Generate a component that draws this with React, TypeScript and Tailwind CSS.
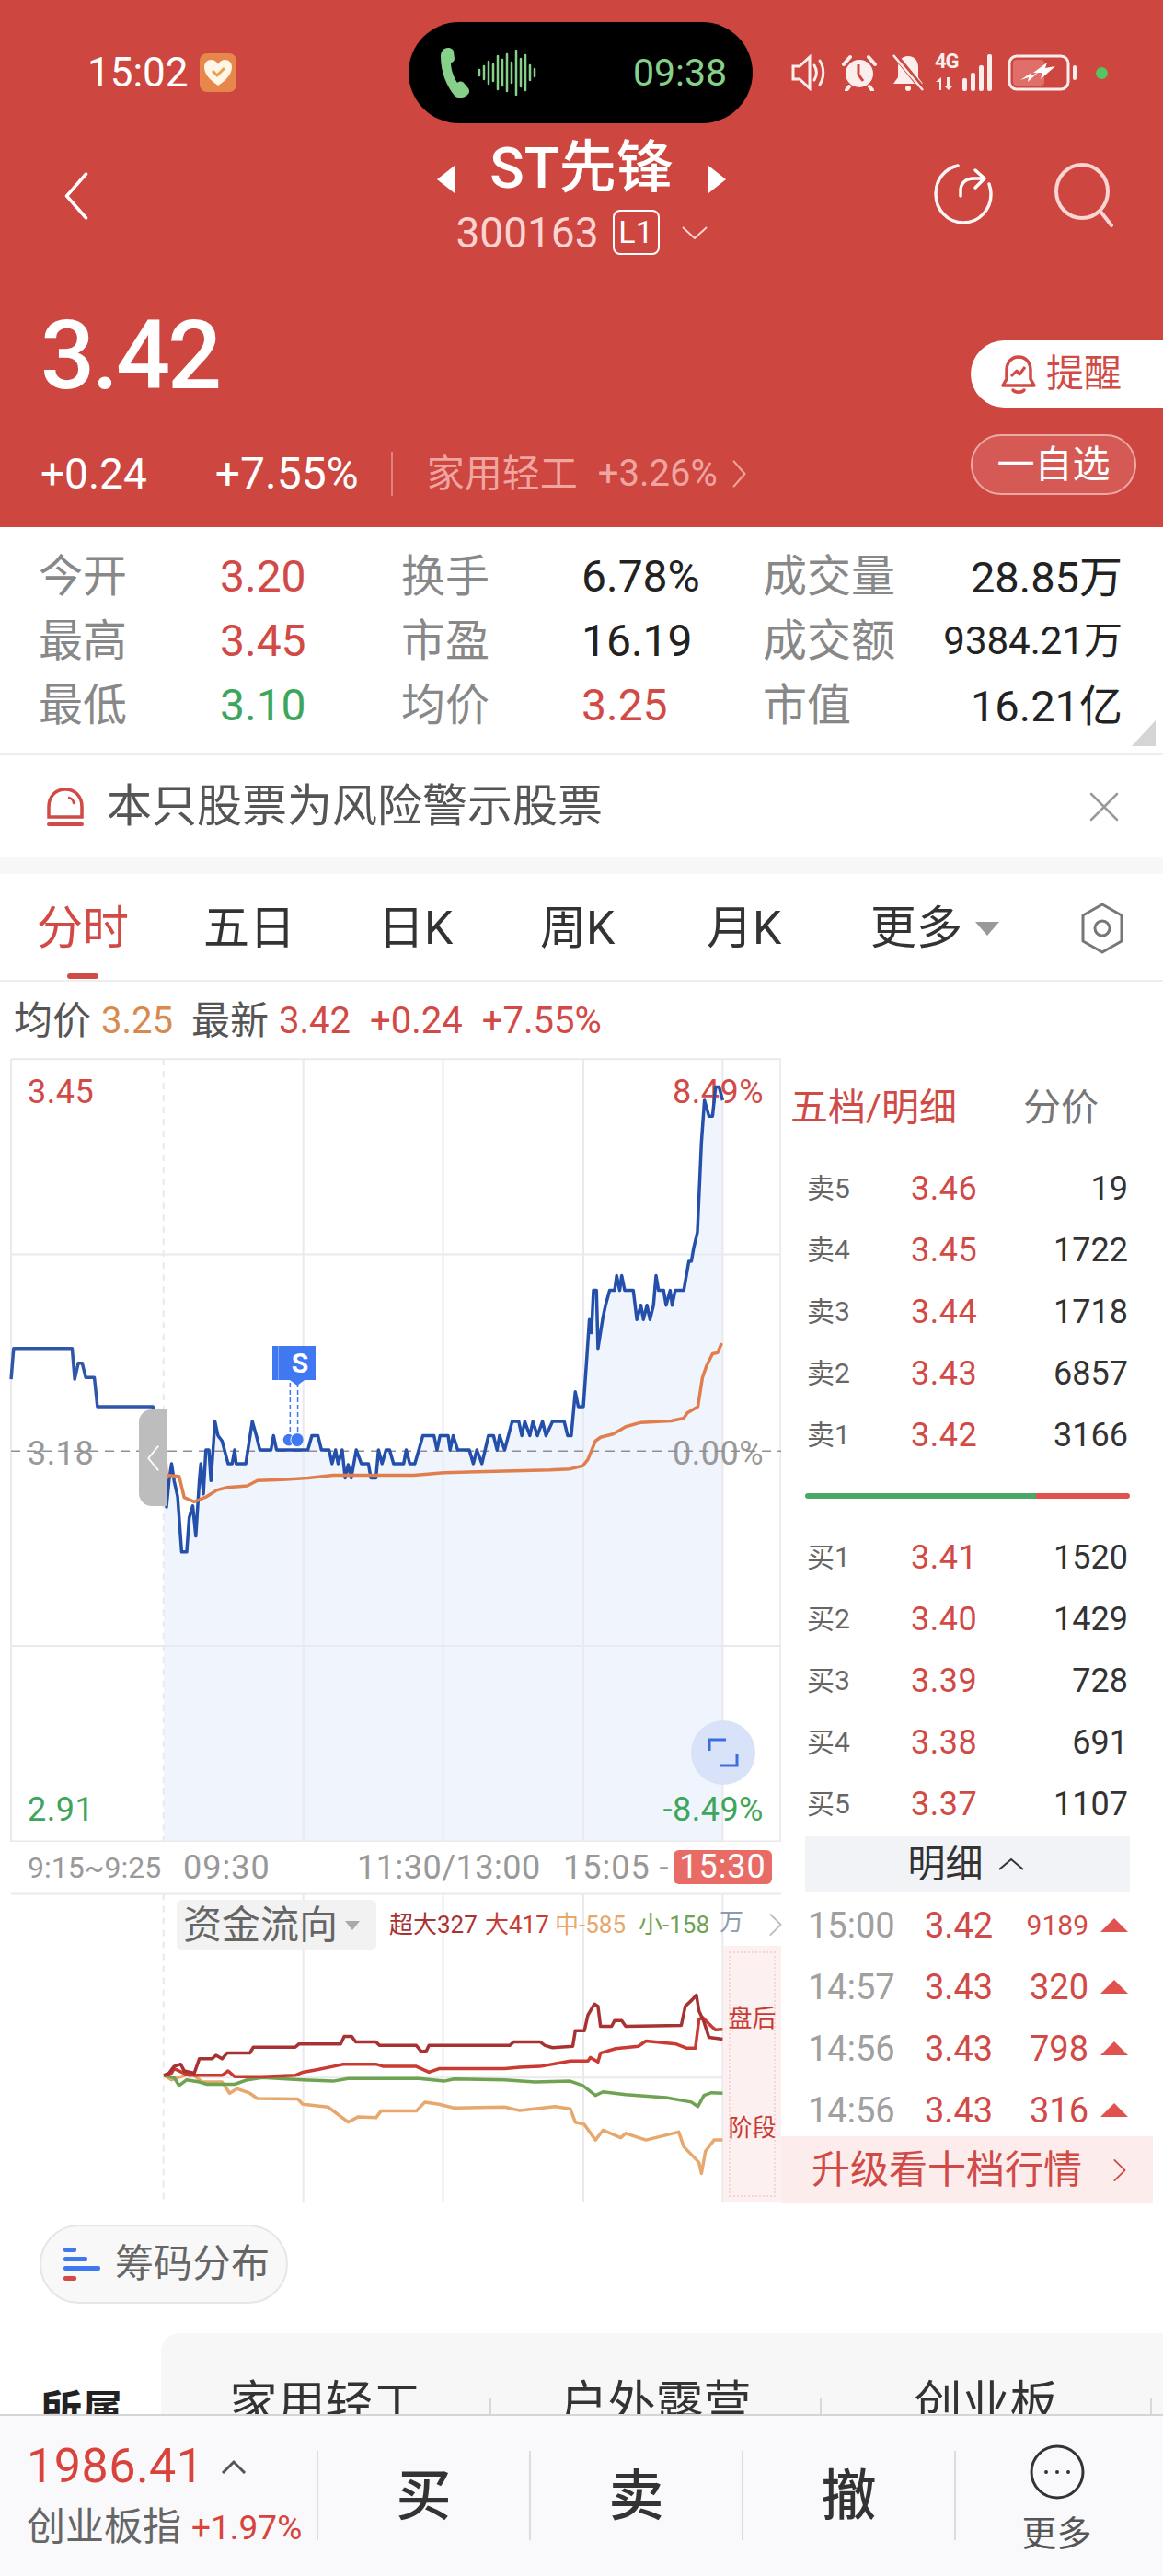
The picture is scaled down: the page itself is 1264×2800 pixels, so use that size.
import React from 'react';

const priceLine = '22,608 27,550 143,550 148,608 155,578 163,578 170,605 187,605 193,660 303,660 308,688 325,688';
const tradeLine = '325,688 330,850 335,800 340,768 345,800 352,830 360,935 370,935 375,870 382,848 388,905 395,800 398,768 403,825 408,742 414,742 418,800 426,688 432,715 440,725 452,768 460,768 465,742 468,768 487,768 500,688 508,715 515,742 537,742 542,715 548,742 600,742 610,742 618,715 630,715 637,742 652,742 658,768 665,742 670,768 678,742 684,795 690,770 696,795 706,742 716,768 730,768 735,795 745,795 750,742 757,768 765,742 772,742 780,768 800,768 805,742 812,768 822,768 830,742 838,715 860,715 866,742 872,715 888,715 892,742 898,715 907,742 930,742 938,768 945,742 955,768 968,715 978,715 985,742 990,715 1000,742 1015,688 1028,688 1034,715 1040,688 1050,715 1056,688 1065,715 1075,688 1082,715 1095,688 1118,688 1125,715 1132,715 1140,632 1146,660 1156,660 1162,580 1168,495 1172,520 1176,440 1182,440 1185,550 1195,490 1200,468 1208,440 1218,440 1222,412 1228,440 1232,412 1238,440 1255,440 1262,495 1270,468 1275,495 1282,468 1288,495 1295,468 1300,412 1305,440 1315,440 1320,468 1328,440 1332,468 1338,440 1355,440 1365,385 1370,385 1375,358 1382,330 1390,160 1396,80 1405,110 1412,110 1418,55 1425,55 1432,80';
const avgLine = '325,690 330,790 355,792 365,832 385,840 410,830 430,818 450,813 490,810 510,800 560,798 610,795 660,790 820,790 880,785 1000,782 1090,780 1130,778 1155,772 1165,760 1180,725 1190,718 1215,712 1240,698 1270,690 1330,687 1355,682 1362,672 1383,660 1392,605 1400,583 1412,560 1422,558 1430,540';

const flowLines = [
  { color: '#e6a86c', points: '325,445 340,455 380,440 400,460 440,460 455,485 470,475 495,485 510,497 590,498 600,510 650,516 690,550 710,538 745,540 755,525 825,525 842,505 870,510 900,518 1000,516 1030,524 1100,515 1130,520 1140,550 1158,555 1180,590 1195,568 1230,585 1240,575 1280,590 1345,572 1355,605 1385,640 1390,665 1398,615 1415,590 1432,590' },
  { color: '#6fa352', points: '325,445 345,450 355,468 370,455 395,460 410,465 465,465 490,455 520,450 600,455 660,458 690,452 830,452 880,458 900,453 1000,455 1060,460 1130,458 1155,468 1180,490 1195,482 1240,488 1320,495 1370,505 1383,515 1395,490 1410,484 1432,485' },
  { color: '#c83a32', points: '325,445 340,440 345,430 360,438 375,445 440,445 452,435 465,448 520,448 585,445 600,438 630,432 660,425 680,420 745,420 760,425 825,425 850,438 870,430 1000,430 1030,427 1070,425 1130,413 1165,413 1170,405 1185,415 1190,395 1220,385 1265,380 1280,368 1340,375 1360,384 1378,384 1385,320 1392,315 1410,335 1418,343 1432,342' },
  { color: '#a83232', points: '325,445 335,440 345,425 358,420 365,435 385,440 395,408 420,408 428,400 440,408 450,395 495,395 502,382 585,382 592,375 675,375 682,358 697,358 705,370 745,370 752,378 825,378 835,392 845,390 850,378 1010,378 1018,370 1070,370 1080,378 1095,383 1135,380 1140,345 1158,345 1165,310 1178,285 1185,290 1190,335 1212,335 1218,322 1232,322 1240,335 1350,333 1358,290 1372,275 1380,265 1385,300 1395,325 1405,360 1432,364' },
];

const stats = [
  ['今开', '3.20', 'text-[#d14a46]', '换手', '6.78%', 'text-[#222]', '成交量', '28.85万', 'text-[47px]'],
  ['最高', '3.45', 'text-[#d14a46]', '市盈', '16.19', 'text-[#222]', '成交额', '9384.21万', 'text-[42px]'],
  ['最低', '3.10', 'text-[#3ea55c]', '均价', '3.25', 'text-[#d14a46]', '市值', '16.21亿', 'text-[47px]'],
];

const asks = [['卖5', '3.46', '19'], ['卖4', '3.45', '1722'], ['卖3', '3.44', '1718'], ['卖2', '3.43', '6857'], ['卖1', '3.42', '3166']];
const bids = [['买1', '3.41', '1520'], ['买2', '3.40', '1429'], ['买3', '3.39', '728'], ['买4', '3.38', '691'], ['买5', '3.37', '1107']];
const trades = [
  ['15:00', '3.42', '9189', 'text-[30px]'],
  ['14:57', '3.43', '320', 'text-[38px]'],
  ['14:56', '3.43', '798', 'text-[38px]'],
  ['14:56', '3.43', '316', 'text-[38px]'],
];
const waveHeights = [6, 14, 24, 18, 36, 28, 40, 22, 48, 30, 38, 16, 8];

const Line = ({ points, color, width }: { points: string; color: string; width: number }) => (
  <polyline points={points} fill="none" stroke={color} strokeWidth={width} strokeLinejoin="round" vectorEffect="non-scaling-stroke" />
);

const Grid = ({ x1, y1, x2, y2, dash }: { x1: number; y1: number; x2: number; y2: number; dash?: boolean }) => (
  <line x1={x1} y1={y1} x2={x2} y2={y2} stroke="#e9e9ee" strokeWidth={2} strokeDasharray={dash ? '7 6' : undefined} vectorEffect="non-scaling-stroke" />
);

const StatusIcons = () => (
  <div className="flex items-center pl-[42px]">
    {/* speaker */}
    <svg width="38" height="40" viewBox="0 0 38 40" fill="none" stroke="#fdeeee" strokeWidth="3">
      <path d="M2 13h7l11-10v34L9 27H2z" />
      <path d="M25 12c3 5 3 11 0 16M31 7c5 8 5 18 0 26" strokeLinecap="round" />
    </svg>
    {/* alarm */}
    <svg width="40" height="40" viewBox="0 0 40 40" className="ml-[16px]">
      <circle cx="20" cy="21" r="15" fill="#fdeeee" />
      <path d="M3 11 10 3M37 11 30 3M9 35l-3 4M31 35l3 4" stroke="#fdeeee" strokeWidth="4" strokeLinecap="round" />
      <path d="M19 11v11l5 7" stroke="#cd4640" strokeWidth="3" fill="none" />
    </svg>
    {/* muted bell */}
    <svg width="38" height="42" viewBox="0 0 38 42" className="ml-[14px]">
      <path d="M19 3c-7 0-11 5-11 12v11l-5 7h32l-5-7V15C30 8 26 3 19 3z" fill="#fdeeee" />
      <circle cx="19" cy="38" r="3" fill="#fdeeee" />
      <path d="M4 1l31 38" stroke="#cd4640" strokeWidth="6" />
      <path d="M3 2l32 38" stroke="#fdeeee" strokeWidth="2.5" />
    </svg>
    {/* 4G + signal */}
    <div className="relative w-[62px] h-[40px] ml-[10px]">
      <span className="absolute left-0 top-[-2px] text-[22px] font-bold leading-[20px] text-[#fdeeee] tracking-[-1px]">4G</span>
      <svg width="22" height="14" viewBox="0 0 22 14" className="absolute left-0 top-[25px]" fill="#fdeeee">
        <path d="M5 14V5H1l6-5v14zM13 0v9h-3l5 5 5-5h-3V0z" />
      </svg>
      <div className="absolute right-0 bottom-0 flex items-end gap-[4px]">
        <div className="w-[5px] h-[14px] bg-[#fdeeee] rounded-[2px]" />
        <div className="w-[5px] h-[20px] bg-[#fdeeee] rounded-[2px]" />
        <div className="w-[5px] h-[28px] bg-[#fdeeee] rounded-[2px]" />
        <div className="w-[5px] h-[40px] bg-[#fdeeee] rounded-[2px]" />
      </div>
    </div>
    {/* battery */}
    <svg width="76" height="40" viewBox="0 0 76 40" className="ml-[17px]">
      <rect x="2" y="2" width="64" height="36" rx="8" fill="none" stroke="#fdeeee" strokeWidth="3" />
      <rect x="6" y="6" width="34" height="28" rx="4" fill="#e06f6a" />
      <rect x="71" y="12" width="4" height="16" rx="2" fill="#fdeeee" />
      <path d="M14 28l12-8-1 4 9-5-12 11 1-5zM28 20l15-11-2 6 11-2-16 14 2-7z" fill="#fff" />
    </svg>
    <div className="w-[13px] h-[13px] rounded-full bg-[#57c461] ml-[20px]" />
  </div>
);

const ShareIcon = () => (
  <svg width="66" height="68" viewBox="0 0 66 68" fill="none" stroke="#fff" strokeWidth="3.5" strokeLinecap="round" strokeLinejoin="round">
    <path d="M27 3C13 6 3 18 3 34c0 17 13 31 30 31s30-14 30-31c0-4-1-8-2-11" opacity="0.95" />
    <path d="M30 36v-6c0-8 6-13 14-13h10M46 8l10 9-10 10" />
  </svg>
);

const SearchIcon = () => (
  <svg width="66" height="70" viewBox="0 0 66 70" fill="none" stroke="#fbd5d3" strokeWidth="4" strokeLinecap="round">
    <ellipse cx="31" cy="31" rx="28" ry="29" />
    <path d="M52 54l11 14" />
  </svg>
);

const BellIcon = () => (
  <svg width="40" height="44" viewBox="0 0 40 44" fill="none" stroke="#d14a46" strokeWidth="3.5" strokeLinejoin="round">
    <path d="M20 3C11 3 7 10 7 18v9l-4 7h34l-4-7v-9C33 10 29 3 20 3z" />
    <path d="M14 39c2 3 10 3 12 0" strokeLinecap="round" />
    <path d="M12 24l6-6 3 4 6-8" strokeWidth="3" />
  </svg>
);

const AxisLabel = ({ className, children }: { className: string; children: React.ReactNode }) => (
  <span className={`absolute text-[36px] leading-[44px] tracking-[0.5px] ${className}`}>{children}</span>
);

const BookRow = ({ row }: { row: string[] }) => (
  <div className="flex items-center h-[67px] pl-[28px] pr-[38px]">
    <span className="w-[113px] text-[30px] text-[#666]">{row[0]}</span>
    <span className="text-[36px] text-[#d14a46] tracking-[0.5px]">{row[1]}</span>
    <span className="ml-auto text-[36px] text-[#333]">{row[2]}</span>
  </div>
);

const Chevron = ({ className, color, width = 2.5 }: { className: string; color: string; width?: number }) => (
  <svg viewBox="0 0 20 40" className={className} fill="none" stroke={color} strokeWidth={width} strokeLinecap="round" strokeLinejoin="round" preserveAspectRatio="none">
    <path d="M3 3l14 17L3 37" />
  </svg>
);

export default function App() {
  return (
    <div className="w-[1264px] h-[2800px] flex flex-col overflow-hidden bg-white font-[family-name:Roboto,'Noto_Sans_CJK_SC',sans-serif]">
      <div className="flex-1 min-h-0 overflow-hidden">
        {/* Red header */}
        <header className="h-[573px] bg-[#cd4640] text-white flex flex-col">
          {/* status bar */}
          <div className="flex h-[110px] mt-[24px] shrink-0 items-center">
            <div className="w-[444px] pl-[95px] flex items-center">
              <span className="text-[44px] leading-none">15:02</span>
              <div className="ml-[12px] w-[40px] h-[42px] rounded-[8px] bg-[#e8874c] flex items-center justify-center">
                <svg width="32" height="30" viewBox="0 0 32 30">
                  <path d="M16 29C6 22 1 16 1 9c0-9 11-11 15-3 4-8 15-6 15 3 0 7-5 13-15 20z" fill="#fff6e8" />
                  <path d="M10 13l5 5 8-8" stroke="#e8a04c" strokeWidth="3" fill="none" />
                </svg>
              </div>
            </div>
            <div className="w-[374px] h-[110px] rounded-[55px] bg-black flex items-center pl-[35px]">
              <svg width="32" height="56" viewBox="0 0 32 56">
                <path d="M8 1C3 1 0 5 0 10c0 17 6 32 15 43 3 3 9 3 13 0 3-2 4-5 2-8l-5-6c-2-2-5-2-7 0-5-8-7-16-7-22 2 0 4-2 4-4l-1-8C14 3 11 1 8 1z" fill="#86d08a" />
              </svg>
              <svg width="68" height="50" viewBox="0 0 68 50" className="ml-[7px]" stroke="#86d08a" strokeWidth="2.5" strokeLinecap="round">
                {waveHeights.map((h, i) => (
                  <line key={i} x1={3 + i * 5} x2={3 + i * 5} y1={25 - h / 2} y2={25 + h / 2} />
                ))}
              </svg>
              <span className="ml-[102px] text-[41px] leading-none text-[#86d08a]">09:38</span>
            </div>
            <StatusIcons />
          </div>

          {/* nav */}
          <div className="h-[206px] shrink-0 grid grid-cols-[1fr_auto_1fr]">
            <div className="pl-[68px] pt-[51px]">
              <Chevron className="w-[30px] h-[56px] rotate-180" color="#fff" width={2.5} />
            </div>
            <div className="flex flex-col items-center pt-[20px]">
              <div className="flex items-center h-[58px]">
                <div className="w-0 h-0 border-y-[15px] border-y-transparent border-r-[19px] border-r-white mt-[24px]" />
                <span className="mx-[38px] text-[62px] font-medium leading-[58px]">ST先锋</span>
                <div className="w-0 h-0 border-y-[15px] border-y-transparent border-l-[19px] border-l-white mt-[24px]" />
              </div>
              <div className="flex items-center h-[49px] mt-[16px]">
                <span className="text-[46px] leading-none text-[#fbd3d1]">300163</span>
                <span className="ml-[15px] w-[51px] h-[49px] border-2 border-white rounded-[8px] text-[34px] leading-[44px] text-center">L1</span>
                <svg width="28" height="14" viewBox="0 0 28 14" className="ml-[24px]" fill="none" stroke="#fbd3d1" strokeWidth="2">
                  <path d="M1 1l13 12L27 1" />
                </svg>
              </div>
            </div>
            <div className="flex justify-end pr-[53px] pt-[43px] gap-[65px] items-start">
              <ShareIcon />
              <SearchIcon />
            </div>
          </div>

          {/* quote */}
          <div className="flex flex-1 min-h-0">
            <div className="pl-[44px] flex-1">
              <div className="mt-[8px] h-[78px] text-[104px] leading-[78px] tracking-[-3px] font-medium">3.42</div>
              <div className="mt-[65px] h-[48px] flex items-center">
                <span className="text-[46px] leading-none">+0.24</span>
                <span className="ml-[74px] text-[48px] leading-none">+7.55%</span>
                <div className="ml-[35px] w-[2px] h-[48px] bg-[#df8580]" />
                <span className="ml-[37px] text-[41px] leading-none text-[#f0a5a0]">家用轻工</span>
                <span className="ml-[22px] text-[40px] leading-none text-[#f0a5a0]">+3.26%</span>
                <Chevron className="ml-[15px] w-[17px] h-[32px]" color="#f0a5a0" />
              </div>
            </div>
            <div className="w-[209px] shrink-0">
              <div className="mt-[30px] h-[73px] bg-white rounded-l-[37px] flex items-center pl-[32px] text-[41px] text-[#d14a46]">
                <BellIcon />
                <span className="ml-[10px] leading-none">提醒</span>
              </div>
              <div className="mt-[29px] w-[180px] h-[66px] rounded-[33px] border-2 border-[#ecaaa6] bg-[#d55a55] flex items-center justify-center text-[41px] leading-none">
                一自选
              </div>
            </div>
          </div>
        </header>

        {/* Stats */}
        <section className="relative pt-[19px] pb-[17px] pl-[42px] pr-[44px] border-b-2 border-[#eeeeee] grid grid-cols-[197px_197px_196px_197px_1fr_auto] auto-rows-[70px] items-center">
          {stats.map((r) => (
            <React.Fragment key={r[0]}>
              <span className="text-[48px] leading-none text-[#888]">{r[0]}</span>
              <span className={`text-[48px] leading-none ${r[2]}`}>{r[1]}</span>
              <span className="text-[48px] leading-none text-[#888]">{r[3]}</span>
              <span className={`text-[48px] leading-none ${r[5]}`}>{r[4]}</span>
              <span className="text-[48px] leading-none text-[#888]">{r[6]}</span>
              <span className={`${r[8]} leading-none text-[#222] text-right`}>{r[7]}</span>
            </React.Fragment>
          ))}
          <div className="absolute right-[8px] bottom-[8px] w-0 h-0 border-b-[28px] border-b-[#d5d5d5] border-l-[26px] border-l-transparent" />
        </section>

        {/* Risk notice */}
        <div className="h-[111px] flex items-center pl-[50px] pr-[48px]">
          <svg width="42" height="42" viewBox="0 0 42 42" fill="none" stroke="#d14a46" strokeWidth="3.5" strokeLinecap="round">
            <path d="M3 32V21C3 10 10 2 21 2s18 8 18 19v11H3z" />
            <path d="M3 40h36" strokeWidth="4" />
            <path d="M25 11c3 1 5 3 5 6" strokeWidth="2.5" />
          </svg>
          <span className="ml-[24px] text-[49px] leading-none text-[#555]">本只股票为风险警示股票</span>
          <svg width="32" height="32" viewBox="0 0 32 32" className="ml-auto" stroke="#999" strokeWidth="2.5" strokeLinecap="round">
            <path d="M2 2l28 28M30 2L2 30" />
          </svg>
        </div>
        <div className="h-[18px] bg-[#f7f7f7]" />

        {/* Period tabs */}
        <nav className="relative h-[117px] border-b-2 border-[#eeeeee] pl-[40px] pt-[3px] grid grid-cols-[181px_190px_176px_181px_178px_227px_50px] items-center text-[50px] text-[#333]">
          <span className="leading-none text-[#d14a46]">分时</span>
          <span className="leading-none">五日</span>
          <span className="leading-none">日K</span>
          <span className="leading-none">周K</span>
          <span className="leading-none">月K</span>
          <div className="flex items-center">
            <span className="leading-none">更多</span>
            <div className="ml-[14px] w-0 h-0 border-x-[13px] border-x-transparent border-t-[15px] border-t-[#999]" />
          </div>
          <svg width="50" height="56" viewBox="0 0 50 56" fill="none" stroke="#777" strokeWidth="3">
            <path d="M25 2l21 12v28L25 54 4 42V14z" strokeLinejoin="round" />
            <circle cx="25" cy="28" r="8" />
          </svg>
          <div className="absolute left-[73px] bottom-[1px] w-[34px] h-[6px] rounded-[3px] bg-[#d14a46]" />
        </nav>

        {/* Price summary */}
        <div className="h-[83px] flex items-center pl-[15px] pt-[3px] text-[40px] leading-none">
          <span className="text-[42px] text-[#555]">均价</span>
          <span className="ml-[11px] text-[#d68a50]">3.25</span>
          <span className="ml-[20px] text-[42px] text-[#555]">最新</span>
          <span className="ml-[11px] text-[#d14a46]">3.42</span>
          <span className="ml-[21px] text-[#d14a46]">+0.24</span>
          <span className="ml-[21px] text-[#d14a46]">+7.55%</span>
        </div>

        <div className="flex">
          {/* Charts */}
          <div className="w-[849px] shrink-0">
            <div className="relative h-[852px]">
              <svg viewBox="0 0 1548 1484" width="849" height="852" preserveAspectRatio="none" className="absolute left-0 top-0">
                <polygon points={`${tradeLine} 1432,1484 325,1484`} fill="#eff4fd" />
                <Grid x1={22} y1={2} x2={1548} y2={2} />
                <Grid x1={22} y1={372} x2={1548} y2={372} />
                <Grid x1={22} y1={1113} x2={1548} y2={1113} />
                <Grid x1={22} y1={1483} x2={1548} y2={1483} />
                <Grid x1={22} y1={2} x2={22} y2={1484} />
                <Grid x1={1547} y1={2} x2={1547} y2={1484} />
                <Grid x1={324} y1={2} x2={324} y2={1484} dash />
                <Grid x1={601} y1={2} x2={601} y2={1484} />
                <Grid x1={878} y1={2} x2={878} y2={1484} />
                <Grid x1={1156} y1={2} x2={1156} y2={1484} />
                <Grid x1={1432} y1={2} x2={1432} y2={1484} />
              </svg>
              <AxisLabel className="left-[30px] top-[15px] text-[#d14a46]">3.45</AxisLabel>
              <AxisLabel className="right-[19px] top-[15px] text-[#d14a46]">8.49%</AxisLabel>
              <AxisLabel className="left-[30px] top-[408px] text-[#999]">3.18</AxisLabel>
              <AxisLabel className="right-[19px] top-[408px] text-[#999]">0.00%</AxisLabel>
              <AxisLabel className="left-[30px] top-[795px] text-[#3ea55c]">2.91</AxisLabel>
              <AxisLabel className="right-[19px] top-[795px] text-[#3ea55c]">-8.49%</AxisLabel>
              <svg viewBox="0 0 1548 1484" width="849" height="852" preserveAspectRatio="none" className="absolute left-0 top-0">
                <line x1={22} y1={744} x2={1548} y2={744} stroke="#8f8f8f" strokeWidth={1.5} strokeDasharray="10 7" vectorEffect="non-scaling-stroke" />
                <Line points={priceLine} color="#2f56a8" width={3.5} />
                <Line points={tradeLine} color="#2450ab" width={3.5} />
                <Line points={avgLine} color="#e07f4d" width={3.5} />
                <line x1={575} y1={615} x2={575} y2={712} stroke="#3f78f0" strokeWidth={1.5} strokeDasharray="5 3" vectorEffect="non-scaling-stroke" />
                <line x1={590} y1={615} x2={590} y2={712} stroke="#3f78f0" strokeWidth={1.5} strokeDasharray="5 3" vectorEffect="non-scaling-stroke" />
                <ellipse cx={572} cy={723} rx={11} ry={11} fill="#3f78f0" />
                <ellipse cx={589} cy={723} rx={13} ry={13} fill="#3f78f0" stroke="#eff4fd" strokeWidth={1} vectorEffect="non-scaling-stroke" />
              </svg>
              {/* sell marker */}
              <div className="absolute left-[296px] top-[313px] w-[47px] h-[37px] bg-[#3f78f0] flex items-center justify-center pl-[13px] text-[30px] font-bold leading-none text-white">
                <div className="absolute left-[6px] top-0 w-[1px] h-[37px] bg-[#7ea6f6]" />
                S
              </div>
              <div className="absolute left-[315px] top-[350px] w-0 h-0 border-x-[8px] border-x-transparent border-t-[6px] border-t-[#3f78f0]" />
              {/* collapse handle */}
              <div className="absolute left-[151px] top-[382px] w-[31px] h-[105px] rounded-l-[14px] bg-[#bdbdbd] flex items-center justify-center">
                <Chevron className="w-[15px] h-[30px] rotate-180" color="#fff" />
              </div>
              {/* fullscreen */}
              <div className="absolute left-[751px] top-[720px] w-[70px] h-[70px] rounded-full bg-[#d8e2f8] flex items-center justify-center">
                <svg width="34" height="32" viewBox="0 0 34 32" fill="none" stroke="#3d6fd8" strokeWidth="3">
                  <path d="M2 14V2h18M32 17v13H13" />
                </svg>
              </div>
            </div>

            {/* Time axis */}
            <div className="h-[55px] flex items-center text-[#999] leading-none pl-[30px]">
              <span className="w-[169px] text-[32px]">9:15~9:25</span>
              <span className="w-[189px] text-[36px] tracking-[1px]">09:30</span>
              <span className="w-[224px] text-[36px] tracking-[0.5px]">11:30/13:00</span>
              <span className="w-[120px] text-[36px] tracking-[1px] whitespace-nowrap">15:05 -</span>
              <span className="w-[107px] h-[37px] rounded-[6px] bg-[#e86b66] text-white text-[36px] leading-[37px] text-center tracking-[1px]">15:30</span>
            </div>

            {/* Fund flow */}
            <div className="relative h-[337px]">
              <svg viewBox="0 35 1548 695" width="849" height="337" preserveAspectRatio="none" className="absolute left-0 top-0">
                <Grid x1={22} y1={38} x2={1548} y2={38} />
                <Grid x1={22} y1={730} x2={1548} y2={730} />
                <Grid x1={324} y1={38} x2={324} y2={730} dash />
                <Grid x1={601} y1={38} x2={601} y2={730} />
                <Grid x1={878} y1={38} x2={878} y2={730} />
                <Grid x1={1156} y1={38} x2={1156} y2={730} />
                <Grid x1={1432} y1={38} x2={1432} y2={730} />
                <Grid x1={325} y1={450} x2={1432} y2={450} />
                {flowLines.map((l) => (
                  <Line key={l.color} points={l.points} color={l.color} width={3.5} />
                ))}
              </svg>
              <div className="absolute left-[192px] top-[8px] w-[217px] h-[55px] rounded-[6px] bg-[#f2f2f2] flex items-center pl-[7px] text-[42px] leading-none text-[#666]">
                资金流向
                <div className="ml-[8px] w-0 h-0 border-x-[8px] border-x-transparent border-t-[10px] border-t-[#aaa]" />
              </div>
              <div className="absolute left-[423px] top-[18px] flex items-center h-[34px] text-[26px] leading-none whitespace-nowrap">
                <span className="w-[104px] text-[#a83232]">超大327</span>
                <span className="w-[76px] text-[#c83a32]">大417</span>
                <span className="w-[91px] text-[#e6a86c]">中-585</span>
                <span className="w-[88px] text-[#6fa352]">小-158</span>
                <span className="text-[#8a9bb0] mb-[6px]">万</span>
                <Chevron className="ml-[27px] w-[16px] h-[26px]" color="#bbb" />
              </div>
              <div className="absolute left-[786px] top-[58px] w-[63px] h-[279px] bg-[#fdf0f0] p-[6px]">
                <div className="h-full border-2 border-dotted border-[#f5d5d5] flex flex-col items-center text-[26px] leading-none text-[#c83a32] whitespace-nowrap">
                  <span className="mt-[58px]">盘后</span>
                  <span className="mt-[93px]">阶段</span>
                </div>
              </div>
            </div>
          </div>

          {/* Order book */}
          <div className="flex-1 min-w-0">
            <div className="h-[108px] flex items-center pl-[10px] text-[41px] leading-none">
              <span className="w-[253px] text-[#d14a46]">五档/明细</span>
              <span className="text-[#777]">分价</span>
            </div>
            {asks.map((r) => <BookRow key={r[0]} row={r} />)}
            <div className="h-[66px] flex items-center pl-[26px] pr-[36px]">
              <div className="w-[251px] h-[6px] rounded-l-[3px] bg-[#4aa765]" />
              <div className="flex-1 h-[6px] rounded-r-[3px] bg-[#e0524d]" />
            </div>
            {bids.map((r) => <BookRow key={r[0]} row={r} />)}
            <div className="mt-[2px] ml-[26px] mr-[36px] h-[60px] bg-[#f2f3f7] flex items-center justify-center text-[41px] leading-none text-[#333] pr-[4px]">
              明细
              <svg width="28" height="14" viewBox="0 0 28 14" className="ml-[16px]" fill="none" stroke="#333" strokeWidth="2">
                <path d="M1 13L14 2l13 11" />
              </svg>
            </div>
            <div className="h-[266px] overflow-hidden pt-[3px]">
              {trades.map((t, i) => (
                <div key={i} className="h-[67px] flex items-center pl-[29px]">
                  <span className="w-[127px] text-[38px] leading-none text-[#a0a0a0]">{t[0]}</span>
                  <span className="w-[78px] text-[38px] leading-none text-[#d14a46]">{t[1]}</span>
                  <span className={`w-[100px] text-right leading-none text-[#d14a46] ${t[3]}`}>{t[2]}</span>
                  <div className="ml-[13px] w-0 h-0 border-x-[15px] border-x-transparent border-b-[15px] border-b-[#e0524d]" />
                </div>
              ))}
            </div>
            <div className="h-[73px] mr-[11px] bg-[#fcecec] flex items-center pl-[33px] text-[42px] leading-none text-[#d14a46]">
              升级看十档行情
              <Chevron className="ml-[33px] w-[16px] h-[26px]" color="#d14a46" />
            </div>
          </div>
        </div>

        {/* Chip distribution */}
        <div className="mt-[23px] ml-[43px] w-[270px] h-[86px] rounded-[43px] bg-[#f8f8f8] border-2 border-[#e6e6e6] flex items-center pl-[24px]">
          <svg width="40" height="36" viewBox="0 0 40 36">
            <rect x="0" y="0" width="14" height="5" rx="2" fill="#3f78f0" />
            <rect x="0" y="10" width="26" height="5" rx="2" fill="#3f78f0" />
            <rect x="0" y="20" width="40" height="5" rx="2" fill="#3f78f0" />
            <rect x="0" y="31" width="14" height="5" rx="2" fill="#d14a46" />
          </svg>
          <span className="ml-[16px] text-[42px] leading-none text-[#666] whitespace-nowrap">筹码分布</span>
        </div>

        {/* Related sectors */}
        <div className="mt-[32px] flex h-[200px]">
          <div className="w-[175px] pl-[44px] pt-[62px] text-[45px] leading-none font-bold text-[#222]">所属</div>
          <div className="flex-1 bg-[#f7f7f7] rounded-tl-[20px] flex text-[52px] leading-none text-[#333]">
            {['家用轻工', '户外露营', '创业板'].map((name) => (
              <div key={name} className="w-[359px] flex">
                <span className="flex-1 text-center pt-[52px]">{name}</span>
                <div className="w-[2px] h-[40px] mt-[70px] bg-[#d8d8d8]" />
              </div>
            ))}
          </div>
        </div>
      </div>

      {/* Bottom bar */}
      <footer className="h-[176px] shrink-0 border-t-2 border-[#d5d5d8] bg-[#f9f9fb] flex items-start text-[#333]">
        <div className="w-[344px] pl-[29px] pt-[32px]">
          <div className="flex items-center h-[46px]">
            <span className="text-[52px] leading-none text-[#d8433c] tracking-[0.5px]">1986.41</span>
            <svg width="28" height="16" viewBox="0 0 28 16" className="ml-[18px]" fill="none" stroke="#555" strokeWidth="3">
              <path d="M2 15L14 3l12 12" />
            </svg>
          </div>
          <div className="flex items-center mt-[22px] whitespace-nowrap">
            <span className="text-[42px] leading-none text-[#666]">创业板指</span>
            <span className="ml-[11px] text-[37px] leading-none text-[#d8433c]">+1.97%</span>
          </div>
        </div>
        <div className="w-[2px] h-[97px] mt-[38px] bg-[#dcdcdc]" />
        <div className="w-[229px] h-[176px] flex items-center justify-center text-[60px] leading-none font-medium">买</div>
        <div className="w-[2px] h-[97px] mt-[38px] bg-[#dcdcdc]" />
        <div className="w-[229px] h-[176px] flex items-center justify-center text-[60px] leading-none font-medium">卖</div>
        <div className="w-[2px] h-[97px] mt-[38px] bg-[#dcdcdc]" />
        <div className="w-[229px] h-[176px] flex items-center justify-center text-[60px] leading-none font-medium">撤</div>
        <div className="w-[2px] h-[97px] mt-[38px] bg-[#dcdcdc]" />
        <div className="flex-1 flex flex-col items-center pt-[31px] pr-[6px]">
          <svg width="60" height="60" viewBox="0 0 60 60" fill="none" stroke="#333" strokeWidth="3">
            <circle cx="30" cy="30" r="28" />
            <circle cx="18" cy="30" r="2" fill="#333" stroke="none" />
            <circle cx="30" cy="30" r="2" fill="#333" stroke="none" />
            <circle cx="42" cy="30" r="2" fill="#333" stroke="none" />
          </svg>
          <span className="mt-[18px] text-[38px] leading-none text-[#555]">更多</span>
        </div>
      </footer>
    </div>
  );
}
